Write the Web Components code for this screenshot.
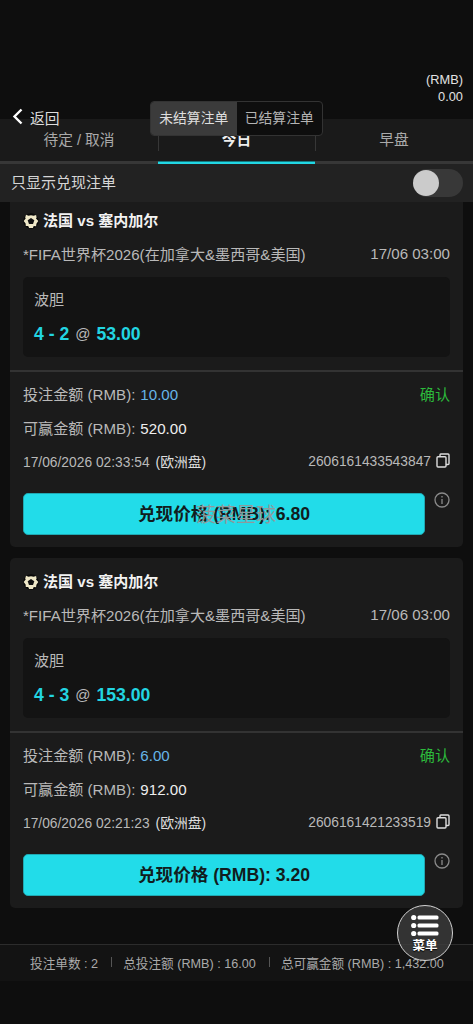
<!DOCTYPE html>
<html lang="zh-CN">
<head>
<meta charset="utf-8">
<title>注单</title>
<style>
html,body{margin:0;background:#0e0e0e;height:1024px;overflow:hidden}
body{font-family:"Liberation Sans","Noto Sans CJK SC",sans-serif;color:#b9b9b9}
</style>
</head>
<body>
<bet-app></bet-app>
<script>
const define = (name, html, setup) => customElements.define(name, class extends HTMLElement {
  constructor() {
    super();
    const t = document.createElement('template');
    t.innerHTML = html;
    this.attachShadow({ mode: 'open' }).append(t.content.cloneNode(true));
  }
  connectedCallback() { if (setup) setup(this, this.shadowRoot); }
});

define('top-bar', `<style>
:host{display:flex;height:119px;box-sizing:border-box;position:relative;align-items:flex-start;justify-content:space-between;padding:0 10px 0 12px;white-space:nowrap}
.back{display:flex;align-items:center;gap:7px;font-size:14.8px;color:#ddd;height:24px;margin-top:105px;position:relative;z-index:3}
svg{display:block;margin-top:-1px}
.bal{margin-top:72px;font-size:12.8px;line-height:16.5px;text-align:right;color:#e2e2e2}
.seg{position:absolute;z-index:3;left:150px;top:101px;width:173px;height:35px;display:flex;box-sizing:border-box;border:1px solid #333;border-radius:4px;overflow:hidden;background:#0e0e0e;font-size:13.8px;line-height:34px;text-align:center}
.seg span{flex:1;color:#b4b4b4}.seg .on{background:#3b3b3b;color:#dedede}
</style>
<div class="back"><svg width="11" height="17" viewBox="0 0 11 17" fill="none" stroke="#fff" stroke-width="2.4"><path d="M9.5 1.5 2.5 8.5l7 7"/></svg><span>返回</span></div>
<div class="seg"><span class="on">未结算注单</span><span>已结算注单</span></div>
<div class="bal">(RMB)<br>0.00</div>`);

define('tab-bar', `<style>
:host{display:grid;grid-template-columns:158px 157px 158px;height:45px;background:#1a1a1a;font-size:14.7px;line-height:42px;text-align:center;color:#aaa}
div{box-sizing:border-box;height:45px;border-bottom:3px solid #373737;display:flex;justify-content:center;position:relative}
div:not(:last-child)::after{content:"";width:1px;height:24px;background:#373737;position:absolute;right:-1px;top:8px}
.on{border-bottom:2px solid #22d7e4;box-shadow:inset 0 -1px #147a82;color:#eee;font-weight:bold;line-height:43px}
</style><div>待定 / 取消</div><div class="on">今日</div><div>早盘</div>`);

define('cash-filter', `<style>
:host{display:flex;align-items:center;justify-content:space-between;height:38px;background:#222;padding:0 10px 0 11px;font-size:15px;color:#d6d6d6}
.t{margin-bottom:3px}
.sw{width:50px;height:28px;border-radius:14px;background:#383838;display:flex;align-items:center;box-sizing:border-box}
i{width:26px;height:26px;border-radius:50%;background:#cbcbcb}
</style><span class="t">只显示兑现注单</span><span class="sw"><i></i></span>`);

define('soccer-icon', `<style>:host{display:block;width:16px;height:16px;margin-top:3px}svg{display:block}</style>
<svg width="16" height="16" viewBox="0 0 16 16"><circle cx="8" cy="8" r="7.7" fill="#080808"/><path d="M3 1.8 5.5 2.8 8 2.2 10.6 2.8 13.1 1.9 13.6 4.6 13 5.6 15.3 8 13.4 10.7 13.1 13.2 10.7 13.1 9.9 14.9 6.1 14.9 5.2 13.1 2.8 13.1 2.6 10.5.7 8 2.7 5.6 2.2 4.4z" fill="#efe8c8"/><path d="m8 4.9 3.3 2.4L10 11H6L4.7 7.3z" fill="#111"/></svg>`);

define('cash-button', `<style>
:host{display:flex;align-items:flex-start;justify-content:space-between;height:42px}
.b{width:402px;height:42px;box-sizing:border-box;background:#22dce9;border:1px solid #20a8b2;border-radius:5px;color:#111d20;font-weight:bold;font-size:17.6px;line-height:41px;text-align:center;white-space:pre;position:relative}
slot[name=mark]{display:block;position:absolute;left:172px;top:0}
svg{margin-top:-1px}
</style><div class="b">兑现价格 (RMB): <slot></slot><slot name="mark"></slot></div>
<svg width="16" height="16" viewBox="0 0 16 16" fill="none" stroke="#8a8a8a" stroke-width="1.3"><circle cx="8" cy="8" r="7"/><path d="M8 7v5M8 4v1.5"/></svg>`);

define('water-mark', `<style>:host{display:block;font-weight:400;font-size:20px;line-height:42px;color:#8e9a9c;white-space:nowrap}</style><slot></slot>`);

define('bet-card', `<style>
:host{display:block;box-sizing:border-box;height:350px;background:#1b1b1b;border-radius:5px;padding-top:10px;font-size:15.1px;white-space:nowrap}
.r{display:flex;align-items:center;justify-content:space-between;margin:0 13px;height:24px}
.title{justify-content:flex-start;gap:4px;font-weight:bold;font-size:15.05px;color:#f2f2f2}
.league{margin-top:10px}
.box{box-sizing:border-box;height:80px;margin:12px 13px 0;background:#131313;border-radius:5px;padding:11px 11px 0}
.label{height:24px;line-height:24px}
.score{height:24px;line-height:24px;margin-top:10px;font-size:17.6px;display:flex;gap:6px}
b{color:#22d5e2}.at{font-size:15px}
.line{height:2px;background:#333;margin:13px 0 9px}
.blue{color:#66b5e8;margin-left:5px}.white{color:#eee;margin-left:5px}.ok{color:#2cba3c}
.win{margin-top:10px}.date{margin-top:10px;font-size:13.8px}.date em{font-style:normal;color:#dedede;margin-left:6px}
.id{display:flex;align-items:center;gap:5px}.id svg{margin-top:-1px}
cash-button{margin:20px 13px 0}
</style>
<div class="r title"><soccer-icon></soccer-icon><span>法国 vs 塞内加尔</span></div>
<div class="r league"><span>*FIFA世界杯2026(在加拿大&amp;墨西哥&amp;美国)</span><span>17/06 03:00</span></div>
<div class="box"><div class="label">波胆</div><div class="score"><b><slot name="pick"></slot></b><span class="at">@</span><b><slot name="odds"></slot></b></div></div>
<div class="line"></div>
<div class="r"><span>投注金额 (RMB):<span class="blue"><slot name="stake"></slot></span></span><span class="ok">确认</span></div>
<div class="r win"><span>可赢金额 (RMB):<span class="white"><slot name="win"></slot></span></span></div>
<div class="r date"><span><slot name="time"></slot><em>(欧洲盘)</em></span><span class="id"><slot name="id"></slot><svg width="14" height="15" viewBox="0 0 14 15" fill="none" stroke="#ddd" stroke-width="1.4"><rect x="1" y="3.7" width="9" height="10.3" rx="1"/><path d="M4 3.5V1.8Q4 1 4.8 1H12q1 0 1 1v8.6q0 .9-.9.9H10"/></svg></span></div>
<cash-button><slot name="cash"></slot><slot name="mark" slot="mark"></slot></cash-button>`);

define('total-bar', `<style>
:host{display:flex;align-items:center;box-sizing:border-box;height:37px;border-top:1px solid #2c2c2c;background:#131313;padding:0 0 2px 30px;font-size:12.65px;color:#aaa;white-space:nowrap}
i{width:1px;height:10px;background:#555}
.a{margin:0 11px 0 13px}.b{margin:0 11px 0 13px}
</style><span>投注单数 : 2</span><i class="a"></i><span>总投注额 (RMB) : 16.00</span><i class="b"></i><span>总可赢金额 (RMB) : 1,432.00</span>`);

define('menu-button', `<style>
:host{position:absolute;left:397px;top:905px;width:56px;height:56px;box-sizing:border-box;border:1.5px solid #d2d2d2;border-radius:50%;background:rgba(62,62,62,.78);display:flex;flex-direction:column;align-items:center;color:#fff;font-weight:bold;font-size:12.5px;line-height:16px;text-shadow:0 1px 1px #000}
svg{display:block;margin-top:8px;flex:none}span{margin-top:1px}
</style><svg width="28" height="23" viewBox="0 0 28 23" fill="#fff"><circle cx="2.7" cy="3.5" r="2.6"/><circle cx="2.7" cy="11.5" r="2.6"/><circle cx="2.7" cy="19.5" r="2.6"/><rect x="6.5" y="1.5" width="21" height="4" rx="1.5"/><rect x="6.5" y="9.5" width="21" height="4" rx="1.5"/><rect x="6.5" y="17.5" width="21" height="4" rx="1.5"/></svg><span>菜单</span>`);

define('bet-app', `<style>
:host{display:flex;flex-direction:column;position:relative;width:473px;height:1024px;overflow:hidden;background:#0e0e0e}
.head{height:202px;flex:none;position:relative;z-index:2;background:#0e0e0e}
.list{display:flex;flex-direction:column;gap:11px;margin:-5px 10px 0;height:747px;flex:none}
</style>
<div class="head"><top-bar></top-bar><tab-bar></tab-bar><cash-filter></cash-filter></div>
<div class="list">
<bet-card><span slot="pick">4 - 2</span><span slot="odds">53.00</span><span slot="stake">10.00</span><span slot="win">520.00</span><span slot="time">17/06/2026 02:33:54</span><span slot="id">2606161433543847</span><span slot="cash">6.80</span><water-mark slot="mark">菠菜星球</water-mark></bet-card>
<bet-card><span slot="pick">4 - 3</span><span slot="odds">153.00</span><span slot="stake">6.00</span><span slot="win">912.00</span><span slot="time">17/06/2026 02:21:23</span><span slot="id">2606161421233519</span><span slot="cash">3.20</span></bet-card>
</div>
<total-bar></total-bar><menu-button></menu-button>`);
</script>
</body>
</html>
